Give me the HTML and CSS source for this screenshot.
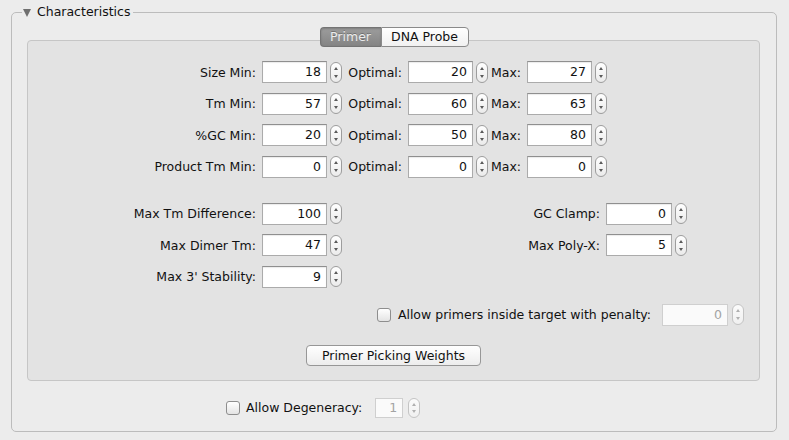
FILE: index.html
```html
<!DOCTYPE html>
<html>
<head>
<meta charset="utf-8">
<title>Characteristics</title>
<link rel="stylesheet" href="styles.css">
</head>
<body>
<fieldset class="group">
  <legend class="group-title"><span class="disclosure"></span>Characteristics</legend>
  <div class="tabs">
    <span class="seg seg-on">Primer</span><span class="seg seg-off">DNA Probe</span>
  </div>
  <div class="panel">
    <div class="ranges">
      <span class="lbl">Size Min:</span><span class="field">18</span><span class="spin"></span>
      <span class="lbl">Optimal:</span><span class="field">20</span><span class="spin"></span>
      <span class="lbl">Max:</span><span class="field">27</span><span class="spin"></span>

      <span class="lbl">Tm Min:</span><span class="field">57</span><span class="spin"></span>
      <span class="lbl">Optimal:</span><span class="field">60</span><span class="spin"></span>
      <span class="lbl">Max:</span><span class="field">63</span><span class="spin"></span>

      <span class="lbl">%GC Min:</span><span class="field">20</span><span class="spin"></span>
      <span class="lbl">Optimal:</span><span class="field">50</span><span class="spin"></span>
      <span class="lbl">Max:</span><span class="field">80</span><span class="spin"></span>

      <span class="lbl">Product Tm Min:</span><span class="field">0</span><span class="spin"></span>
      <span class="lbl">Optimal:</span><span class="field">0</span><span class="spin"></span>
      <span class="lbl">Max:</span><span class="field">0</span><span class="spin"></span>
    </div>

    <div class="params">
      <span class="lbl">Max Tm Difference:</span><span class="field">100</span><span class="spin"></span>
      <span class="lbl">GC Clamp:</span><span class="field">0</span><span class="spin"></span>

      <span class="lbl">Max Dimer Tm:</span><span class="field">47</span><span class="spin"></span>
      <span class="lbl">Max Poly-X:</span><span class="field">5</span><span class="spin"></span>

      <span class="lbl">Max 3' Stability:</span><span class="field">9</span><span class="spin"></span>
    </div>

    <div class="inside-row">
      <span class="check"></span>
      <span class="check-label">Allow primers inside target with penalty:</span>
      <span class="field field-off field-penalty">0</span>
      <span class="spin spin-off"></span>
    </div>

    <div class="btn-row">
      <button class="btn" type="button">Primer Picking Weights</button>
    </div>
  </div>

  <div class="degen-row">
    <span class="check"></span>
    <span class="check-label">Allow Degeneracy:</span>
    <span class="field field-off field-degen">1</span>
    <span class="spin spin-off spin-small"></span>
  </div>
</fieldset>
</body>
</html>
```

FILE: styles.css
```css
html, body {
  margin: 0;
  background: #ececec;
}

body {
  font-family: "DejaVu Sans", "Noto Sans", sans-serif;
  font-size: 12.5px;
  color: #111;
}

.group {
  margin: 4px 0 0 11px;
  width: 766px;
  height: 428px;
  box-sizing: border-box;
  border: 1px solid #bcbcbc;
  border-radius: 5px;
  padding: 0;
  min-width: 0;
}

.group-title {
  margin-left: 10px;
  padding: 0 3px 0 1px;
  display: flex;
  align-items: center;
  height: 16px;
  line-height: 16px;
}

.disclosure {
  width: 0;
  height: 0;
  border-left: 4.5px solid transparent;
  border-right: 4.5px solid transparent;
  border-top: 8px solid #6f6f6f;
  margin-right: 6px;
  margin-top: 1px;
}

.tabs {
  display: flex;
  justify-content: center;
  margin-top: 7px;
  margin-bottom: -7px;
  position: relative;
  z-index: 1;
}

.seg {
  height: 20px;
  box-sizing: border-box;
  line-height: 18px;
  text-align: center;
  border: 1px solid #8a8a8a;
}

.seg-on {
  width: 61px;
  border-radius: 4px 0 0 4px;
  border-color: #747474;
  border-right: none;
  background: linear-gradient(#9d9d9d, #848484);
  color: #ececec;
  text-shadow: 0 -1px 0 rgba(0, 0, 0, 0.25);
  box-shadow: inset 0 1px 2px rgba(0, 0, 0, 0.2);
}

.seg-off {
  width: 88px;
  border-radius: 0 4px 4px 0;
  background: linear-gradient(#ffffff, #f1f1f1);
  color: #111;
}

.panel {
  margin: 0 16px 0 15px;
  background: #e3e3e3;
  border: 1px solid #c6c6c6;
  border-radius: 4px;
  padding: 20px 0 14px;
}

.ranges {
  display: grid;
  grid-template-columns: 234px 65px 15px 66px 65px 15px 39px 65px 15px;
  grid-auto-rows: 22px;
  row-gap: 9.67px;
  align-items: center;
}

.params {
  margin-top: 25px;
  display: grid;
  grid-template-columns: 234px 65px 15px 264px 66px 15px;
  grid-auto-rows: 22px;
  row-gap: 9.5px;
  align-items: center;
}

.lbl {
  text-align: right;
  padding-right: 6px;
  white-space: nowrap;
}

.field {
  height: 22px;
  box-sizing: border-box;
  background: #fff;
  border: 1px solid #ababab;
  border-top-color: #8f8f8f;
  box-shadow: inset 0 1px 1px rgba(0, 0, 0, 0.08);
  text-align: right;
  padding-right: 5px;
  line-height: 20px;
}

.spin {
  justify-self: end;
  width: 12px;
  height: 21px;
  box-sizing: border-box;
  border: 1px solid #9d9d9d;
  border-radius: 6px;
  background: linear-gradient(#ffffff, #ebebeb);
  position: relative;
  flex: none;
}

.spin::before,
.spin::after {
  content: "";
  position: absolute;
  left: 3px;
  width: 0;
  height: 0;
  border-left: 2.5px solid transparent;
  border-right: 2.5px solid transparent;
}

.spin::before {
  top: 4px;
  border-bottom: 3.5px solid #5a5a5a;
}

.spin::after {
  bottom: 4px;
  border-top: 3.5px solid #5a5a5a;
}

.spin-off {
  border-color: #c4c4c4;
  background: linear-gradient(#fbfbfb, #f0f0f0);
}

.spin-off::before {
  border-bottom-color: #b0b0b0;
}

.spin-off::after {
  border-top-color: #b0b0b0;
}

.inside-row {
  margin-top: 16px;
  height: 22px;
  display: flex;
  justify-content: flex-end;
  align-items: center;
  padding-right: 15px;
}

.check {
  width: 14px;
  height: 14px;
  box-sizing: border-box;
  border: 1px solid #8e8e8e;
  border-radius: 3px;
  background: linear-gradient(#ffffff, #e4e4e4);
  flex: none;
}

.inside-row .check {
  margin-right: 7px;
}

.inside-row .check-label {
  margin-right: 11px;
}

.field-off {
  color: #a3a3a3;
  border-color: #cfcfcf;
  box-shadow: none;
  background: #fafafa;
}

.field-penalty {
  width: 66px;
}

.inside-row .spin {
  margin-left: 4px;
}

.btn-row {
  margin-top: 19px;
  display: flex;
  justify-content: center;
}

.btn {
  width: 175px;
  height: 21px;
  padding: 0;
  font: inherit;
  color: #111;
  line-height: 19px;
  border: 1px solid #979797;
  border-radius: 4px;
  background: linear-gradient(#ffffff, #ededed);
}

.degen-row {
  margin-top: 17px;
  height: 20px;
  display: flex;
  align-items: center;
  padding-left: 214px;
}

.degen-row .check {
  margin-right: 6px;
}

.field-degen {
  width: 28px;
  height: 20px;
  line-height: 18px;
  margin-left: 13px;
}

.degen-row .spin {
  margin-left: 5px;
  height: 20px;
}
```
